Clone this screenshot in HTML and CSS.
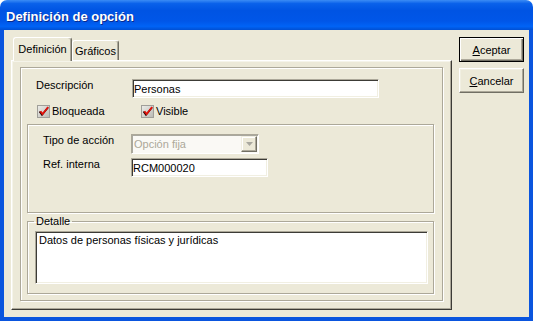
FILE: index.html
```html
<!DOCTYPE html>
<html lang="es">
<head>
  <meta charset="UTF-8">
  <title>Definición de opción</title>
  <link rel="stylesheet" href="styles.css">
</head>
<body>

  <div class="window">
    <div class="titlebar">
      <span class="title">Definición de opción</span>
    </div>

    <div class="frame">
      <div class="tabs-area">
        <div class="tab-strip">
          <div class="tab active">Definición</div>
          <div class="tab">Gráficos</div>
        </div>

        <div class="panel">
          <div class="group outer">
            <div class="row desc-row">
              <span class="label desc-label">Descripción</span>
              <div class="textbox desc-box">Personas</div>
            </div>

            <div class="row checks">
              <div class="check">
                <svg class="check-box" width="13" height="13" viewBox="0 0 13 13">
                  <defs>
                    <linearGradient id="cbfill" x1="0" y1="0" x2="1" y2="1">
                      <stop offset="0" stop-color="#eeeeea"/>
                      <stop offset="1" stop-color="#b9b8b2"/>
                    </linearGradient>
                  </defs>
                  <rect x="0.5" y="0.5" width="12" height="12" fill="url(#cbfill)" stroke="#a09f99"/>
                  <path d="M2.5 6.5 L5 10 L11 2.5" fill="none" stroke="#2a0000" stroke-width="1.6"/>
                  <path d="M3.5 6.2 L5.6 9 L11.2 2" fill="none" stroke="#e3120b" stroke-width="1.8"/>
                </svg>
                <span class="label">Bloqueada</span>
              </div>
              <div class="check">
                <svg class="check-box" width="13" height="13" viewBox="0 0 13 13">
                  <rect x="0.5" y="0.5" width="12" height="12" fill="url(#cbfill)" stroke="#a09f99"/>
                  <path d="M2.5 6.5 L5 10 L11 2.5" fill="none" stroke="#2a0000" stroke-width="1.6"/>
                  <path d="M3.5 6.2 L5.6 9 L11.2 2" fill="none" stroke="#e3120b" stroke-width="1.8"/>
                </svg>
                <span class="label">Visible</span>
              </div>
            </div>

            <div class="group inner">
              <div class="row">
                <span class="label field-label">Tipo de acción</span>
                <div class="combo">
                  <span class="combo-text">Opción fija</span>
                  <span class="combo-btn">
                    <svg width="7" height="4" viewBox="0 0 7 4"><path d="M0 0 H7 L3.5 4 Z" fill="#a9a89f"/></svg>
                  </span>
                </div>
              </div>
              <div class="row ref-row">
                <span class="label field-label">Ref. interna</span>
                <div class="textbox ref-box">RCM000020</div>
              </div>
            </div>

            <fieldset class="group detalle">
              <legend>Detalle</legend>
              <div class="memo">Datos de personas físicas y jurídicas</div>
            </fieldset>
          </div>
        </div>
      </div>

      <div class="buttons">
        <div class="button default"><span><u>A</u>ceptar</span></div>
        <div class="button"><span><u>C</u>ancelar</span></div>
      </div>
    </div>
  </div>

</body>
</html>
```

FILE: styles.css
```css
body {
  margin: 0;
  background: #fff;
  font-family: "Liberation Sans", Arial, sans-serif;
  font-size: 11px;
  color: #000;
}
.window {
  width: 533px;
  height: 321px;
  display: flex;
  flex-direction: column;
}
.titlebar {
  height: 30px;
  box-sizing: border-box;
  padding: 2px 0 0 6px;
  display: flex;
  align-items: center;
  border-radius: 7px 7px 0 0;
  background: linear-gradient(to bottom, #3b8cf5 0%, #0a61ea 12%, #0054e3 35%, #0056e8 70%, #0063f6 88%, #004fd3 100%);
}
.title {
  color: #fff;
  font-weight: bold;
  font-size: 13px;
  text-shadow: 1px 1px #0a2a8c;
}
.frame {
  flex: 1;
  display: flex;
  gap: 7px;
  padding: 7px 5px 7px 7px;
  background: #ece9d8;
  border: 4px solid #0a55de;
  border-top: none;
}
.tabs-area {
  width: 441px;
  display: flex;
  flex-direction: column;
}
.tab-strip {
  height: 23px;
  display: flex;
  align-items: flex-end;
  padding-left: 2px;
}
.tab {
  width: 47px;
  height: 20px;
  box-sizing: border-box;
  display: flex;
  align-items: center;
  justify-content: center;
  background: #ece9d8;
  border: 1px solid;
  border-color: #fff #716f64 transparent #fff;
  border-bottom: none;
  border-radius: 3px 3px 0 0;
  box-shadow: inset -1px 0 #aca899;
}
.tab.active {
  width: 59px;
  height: 24px;
  margin-bottom: -1px;
  padding-bottom: 1px;
  position: relative;
  z-index: 1;
}
.panel {
  height: 250px;
  box-sizing: border-box;
  padding: 6px 0 0 8px;
  border: 1px solid;
  border-color: #fff #3c3b36 #3c3b36 #fff;
  box-shadow: inset -1px -1px #aca899, inset 1px 1px #f5f4ea;
}
.group {
  box-sizing: border-box;
  border: 1px solid #aca899;
  box-shadow: 1px 1px #fff, inset 1px 1px #fff;
}
.outer {
  width: 423px;
  height: 234px;
  padding: 11px 0 0 6px;
}
.row {
  display: flex;
  align-items: flex-start;
}
.label {
  line-height: 13px;
}
.desc-row {
  padding-left: 9px;
}
.desc-label {
  width: 96px;
}
.textbox {
  height: 19px;
  box-sizing: border-box;
  display: flex;
  align-items: center;
  padding-left: 1px;
  background: #fff;
  border: 1px solid;
  border-color: #aca899 #fff #fff #aca899;
  box-shadow: inset 1px 1px #3c3b36, inset -1px -1px #f1efe2;
}
.desc-box {
  width: 247px;
}
.checks {
  margin-top: 7px;
  padding-left: 10px;
}
.check {
  width: 104px;
  display: flex;
  gap: 2px;
}
.inner {
  width: 407px;
  height: 89px;
  margin-top: 6px;
  padding: 9px 0 0 15px;
}
.field-label {
  width: 88px;
}
.combo {
  width: 128px;
  height: 20px;
  box-sizing: border-box;
  display: flex;
  align-items: center;
  justify-content: space-between;
  padding: 1px;
  background: #faf9f5;
  border: 1px solid;
  border-color: #aca899 #fff #fff #aca899;
  box-shadow: inset 1px 1px #a9a89f;
}
.combo-text {
  color: #aca899;
  padding-left: 1px;
}
.combo-btn {
  width: 16px;
  height: 16px;
  box-sizing: border-box;
  display: flex;
  align-items: center;
  justify-content: center;
  background: #ece9d8;
  border: 1px solid;
  border-color: #f1efe2 #716f64 #716f64 #f1efe2;
  box-shadow: inset -1px -1px #aca899, inset 1px 1px #fff;
}
.ref-row {
  margin-top: 4px;
}
.ref-box {
  width: 137px;
}
.detalle {
  width: 407px;
  height: 79px;
  margin: 2px 0 0 0;
  padding: 3px 0 0 7px;
  min-width: 0;
}
.detalle legend {
  margin-left: -1px;
  padding: 0 2px;
  line-height: 13px;
}
.memo {
  width: 393px;
  height: 53px;
  box-sizing: border-box;
  padding: 2px 3px;
  line-height: 13px;
  background: #fff;
  border: 1px solid;
  border-color: #aca899 #fff #fff #aca899;
  box-shadow: inset 1px 1px #3c3b36, inset -1px -1px #f1efe2;
}
.buttons {
  display: flex;
  flex-direction: column;
  gap: 6px;
}
.button {
  width: 65px;
  height: 25px;
  box-sizing: border-box;
  display: flex;
  align-items: center;
  justify-content: center;
  background: #ece9d8;
  border: 1px solid;
  border-color: #fff #716f64 #716f64 #fff;
  box-shadow: inset -1px -1px #aca899, inset 1px 1px #f1efe2;
}
.button.default {
  border-color: #000;
  box-shadow: inset 1px 1px #fff, inset -1px -1px #716f64, inset -2px -2px #aca899;
}
```
